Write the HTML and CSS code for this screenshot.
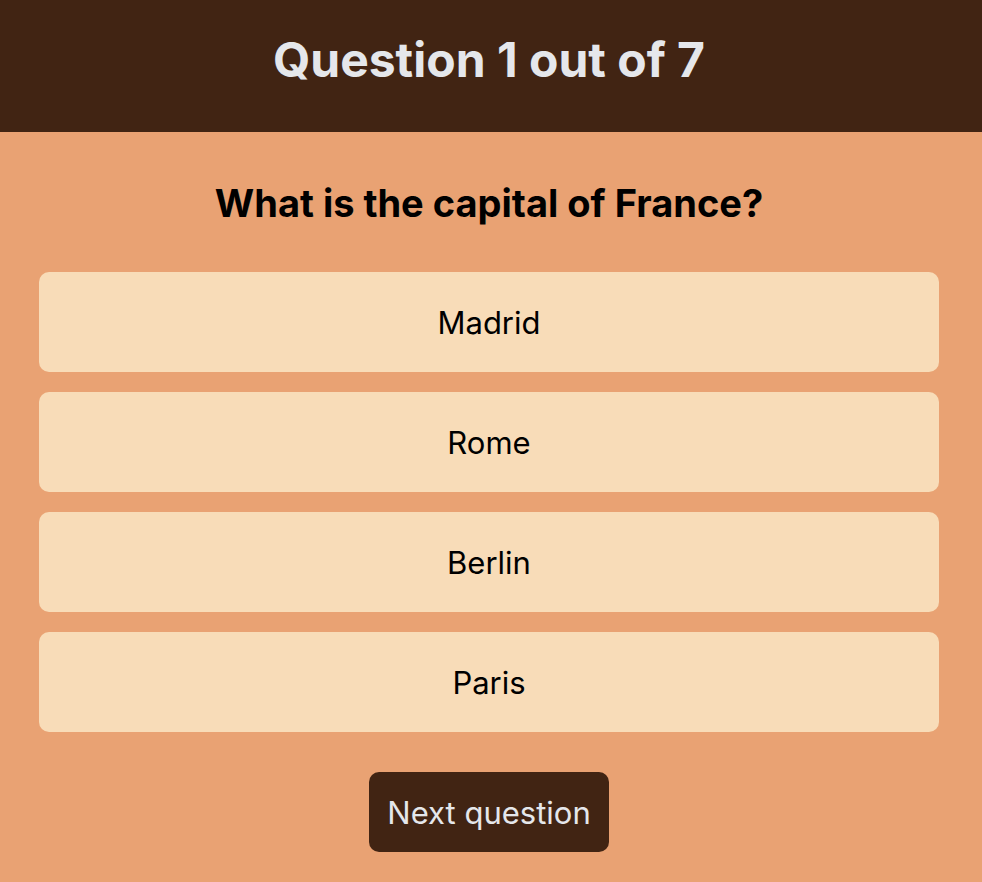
FILE: index.html
```html
<!DOCTYPE html>
<html>
<head>
<meta charset="utf-8">
<link rel="stylesheet" href="styles.css">
</head>
<body>
<header class="top">
  <h1 class="title">Question 1 out of 7</h1>
</header>
<main class="quiz">
  <h2 class="question">What is the capital of France?</h2>
  <div class="answers">
    <button class="answer">Madrid</button>
    <button class="answer">Rome</button>
    <button class="answer">Berlin</button>
    <button class="answer">Paris</button>
  </div>
  <button class="next">Next question</button>
</main>
</body>
</html>
```
FILE: styles.css
```css
* { box-sizing: border-box; }
html, body {
  margin: 0;
  padding: 0;
  background: #e9a273;
  font-family: Inter, "Noto Sans", sans-serif;
  min-height: 100%;
}
.top {
  background: #412413;
  height: 132px;
  display: flex;
  align-items: center;
  justify-content: center;
  padding-right: 4px;
  padding-bottom: 12px;
}
.title {
  margin: 0;
  color: #e5e7eb;
  font-size: 48px;
  font-weight: 700;
  line-height: 58px;
}
.quiz {
  width: 900px;
  margin-left: 39px;
  display: flex;
  flex-direction: column;
  align-items: center;
  padding-top: 48px;
}
.question {
  margin: 0;
  color: #000;
  font-size: 38px;
  font-weight: 700;
  line-height: 46px;
}
.answers {
  width: 100%;
  display: flex;
  flex-direction: column;
  gap: 20px;
  margin-top: 46px;
}
.answer {
  height: 100px;
  border: none;
  border-radius: 10px;
  background: #f8dcb8;
  color: #000;
  font-family: Inter, "Noto Sans", sans-serif;
  font-size: 31px;
  font-weight: 400;
  padding: 0;
}
.next {
  margin-top: 40px;
  width: 240px;
  height: 80px;
  border: none;
  border-radius: 10px;
  background: #412413;
  color: #e5e7eb;
  font-family: Inter, "Noto Sans", sans-serif;
  font-size: 31px;
  font-weight: 400;
  padding: 0;
}
```
